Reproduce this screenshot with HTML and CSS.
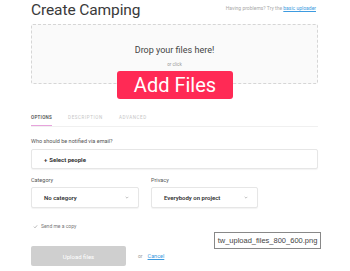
FILE: index.html
```html
<!DOCTYPE html>
<html>
<head>
<meta charset="utf-8">
<link rel="stylesheet" href="styles.css">
</head>
<body>
<div class="page">
  <header class="head">
    <h1 class="title">Create Camping</h1>
    <p class="help">Having problems? Try the <a class="link">basic uploader</a></p>
  </header>
  <section class="drop">
    <p class="drop-main">Drop your files here!</p>
    <p class="drop-or">or click</p>
  </section>
  <div class="add-row"><button class="add">Add Files</button></div>
  <nav class="tabs">
    <span class="tab active">OPTIONS</span>
    <span class="tab">DESCRIPTION</span>
    <span class="tab">ADVANCED</span>
  </nav>
  <label class="label">Who should be notified via email?</label>
  <div class="box people"><span class="plus">+</span> Select people</div>
  <div class="row">
    <div class="field">
      <label class="label">Category</label>
      <div class="box select cat"><span>No category</span><svg class="chev" viewBox="0 0 6 4" width="4" height="3"><path d="M1 1 L3 3 L5 1" fill="none" stroke="#999" stroke-width="0.9"/></svg></div>
    </div>
    <div class="field">
      <label class="label">Privacy</label>
      <div class="box select priv"><span>Everybody on project</span><svg class="chev" viewBox="0 0 6 4" width="4" height="3"><path d="M1 1 L3 3 L5 1" fill="none" stroke="#999" stroke-width="0.9"/></svg></div>
    </div>
  </div>
  <div class="check"><svg class="tick" viewBox="0 0 6 6" width="5" height="5"><path d="M1 3.2 L2.4 4.6 L5 1.6" fill="none" stroke="#999" stroke-width="0.8"/></svg> Send me a copy</div>
  <div class="actions">
    <button class="upload">Upload files</button>
    <span class="or">or</span>
    <a class="link cancel">Cancel</a>
    <div class="tip">tw_upload_files_800_600.png</div>
  </div>
</div>
</body>
</html>
```
FILE: styles.css
```css
* { box-sizing: border-box; margin: 0; padding: 0; }
body { background: #fff; font-family: Roboto, "Noto Sans", sans-serif; color: #333; }
.page { width: 350px; height: 271px; padding: 0 32px 0 31px; position: relative; overflow: hidden; }
.head { display: flex; justify-content: space-between; align-items: flex-start; height: 24px; }
.title { font-size: 15.5px; font-weight: 400; color: #3a3a3a; line-height: 20px; letter-spacing: -0.1px; }
.help { font-size: 5px; color: #aaa; margin-top: 5px; margin-right: 2px; }
.link { color: #3d9be0; text-decoration: underline; }
.drop { height: 60px; background: #fafafa; border: 1px dashed #d6d6d6; border-radius: 2px; display: flex; flex-direction: column; align-items: center; padding-top: 20px; }
.drop-main { font-size: 9px; color: #444; line-height: 10px; }
.drop-or { font-size: 4.5px; color: #999; margin-top: 7px; }
.add-row { display: flex; justify-content: center; margin-top: -13px; padding-left: 1px; }
.add { background: #ff2a55; color: #fff; border: none; border-radius: 3px; font-family: Roboto, sans-serif; font-size: 20px; width: 116px; height: 28px; line-height: 28px; }
.tabs { display: flex; gap: 16px; margin-top: 16px; border-bottom: 1px solid #f0f0f0; height: 12px; align-items: flex-start; }
.tab { font-size: 4.5px; letter-spacing: 0.6px; color: #c6c6c6; padding-bottom: 4px; line-height: 6px; }
.tab.active { color: #444; border-bottom: 1px solid #e7a3dc; font-weight: 500; letter-spacing: 0.3px; }
.label { display: block; font-size: 5.5px; color: #555; line-height: 7px; }
.tabs + .label { margin-top: 11px; }
.box { border: 1px solid #e6e6e6; border-radius: 2px; background: #fff; box-shadow: 0 1px 1px rgba(0,0,0,0.05); font-size: 6px; font-weight: 700; color: #333; display: flex; align-items: center; }
.people { height: 20px; margin-top: 4px; padding-left: 12px; }
.plus { margin-right: 2px; }
.row { display: flex; gap: 12px; margin-top: 8px; }
.field .box { margin-top: 3px; }
.select { height: 21px; justify-content: space-between; padding: 0 9px 0 12px; font-weight: 600; }
.cat { width: 108px; }
.priv { width: 107px; }
.chev { display: block; }
.check { font-size: 5px; color: #777; margin-top: 15px; display: flex; align-items: center; gap: 3px; padding-left: 2px; }
.tick { display: block; }
.actions { display: flex; align-items: center; margin-top: 17px; position: relative; }
.upload { width: 95px; height: 20px; background: #cfcfcf; border: none; border-radius: 2px; color: #fff; font-family: Roboto, sans-serif; font-size: 6px; }
.or { font-size: 5px; color: #999; margin-left: 12px; }
.cancel { font-size: 5.5px; margin-left: 5px; }
.tip { position: absolute; left: 183px; top: -14px; width: 107px; height: 17px; border: 1px solid #888; background: #fff; font-family: "Liberation Sans", Arial, sans-serif; font-size: 7.5px; color: #444; display: flex; align-items: center; justify-content: center; }
```
